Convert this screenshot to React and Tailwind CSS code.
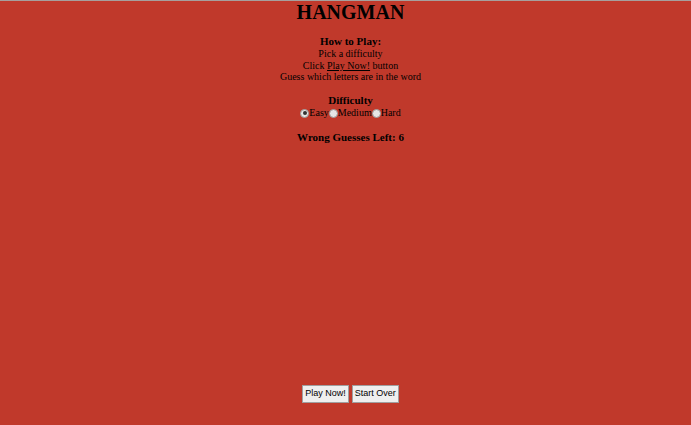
import React from "react";

const Radio = ({ label, checked }) => (
  <label className="flex items-center">
    <span className="w-[9px] h-[9px] rounded-full bg-[#e6e6e6] border border-[#9a9a9a] flex items-center justify-center">
      {checked && <span className="w-[4px] h-[4px] rounded-full bg-[#333]" />}
    </span>
    {label}
  </label>
);

const App = () => {
  return (
    <div className="min-h-[425px] w-full bg-[#c0392b] border-t border-[#a6a09e] text-black font-['Liberation_Serif',serif] flex flex-col items-center pl-[10px]">
      <h1 className="text-[20px] font-bold leading-[22px]">HANGMAN</h1>
      <div className="mt-[12px] flex flex-col items-center text-[10px] leading-[11.7px]">
        <h3 className="text-[11px] font-bold leading-[13px]">How to Play:</h3>
        <p>Pick a difficulty</p>
        <p>
          Click <span className="underline">Play Now!</span> button
        </p>
        <p>Guess which letters are in the word</p>
      </div>
      <div className="mt-[11px] flex flex-col items-center text-[10px] leading-[12px]">
        <h3 className="text-[11px] font-bold leading-[13px]">Difficulty</h3>
        <div className="flex items-center">
          <Radio label="Easy" checked />
          <Radio label="Medium" />
          <Radio label="Hard" />
        </div>
      </div>
      <h3 className="mt-[12px] text-[11px] font-bold leading-[13px]">Wrong Guesses Left: 6</h3>
      <div className="mt-[241px] flex gap-[3px] font-['Liberation_Sans',sans-serif] text-[9px]">
        <button className="h-[18px] px-[2px] bg-[#efefef] border border-[#a0a0a0]">Play Now!</button>
        <button className="h-[18px] px-[2px] bg-[#efefef] border border-[#a0a0a0]">Start Over</button>
      </div>
    </div>
  );
};

export default App;
